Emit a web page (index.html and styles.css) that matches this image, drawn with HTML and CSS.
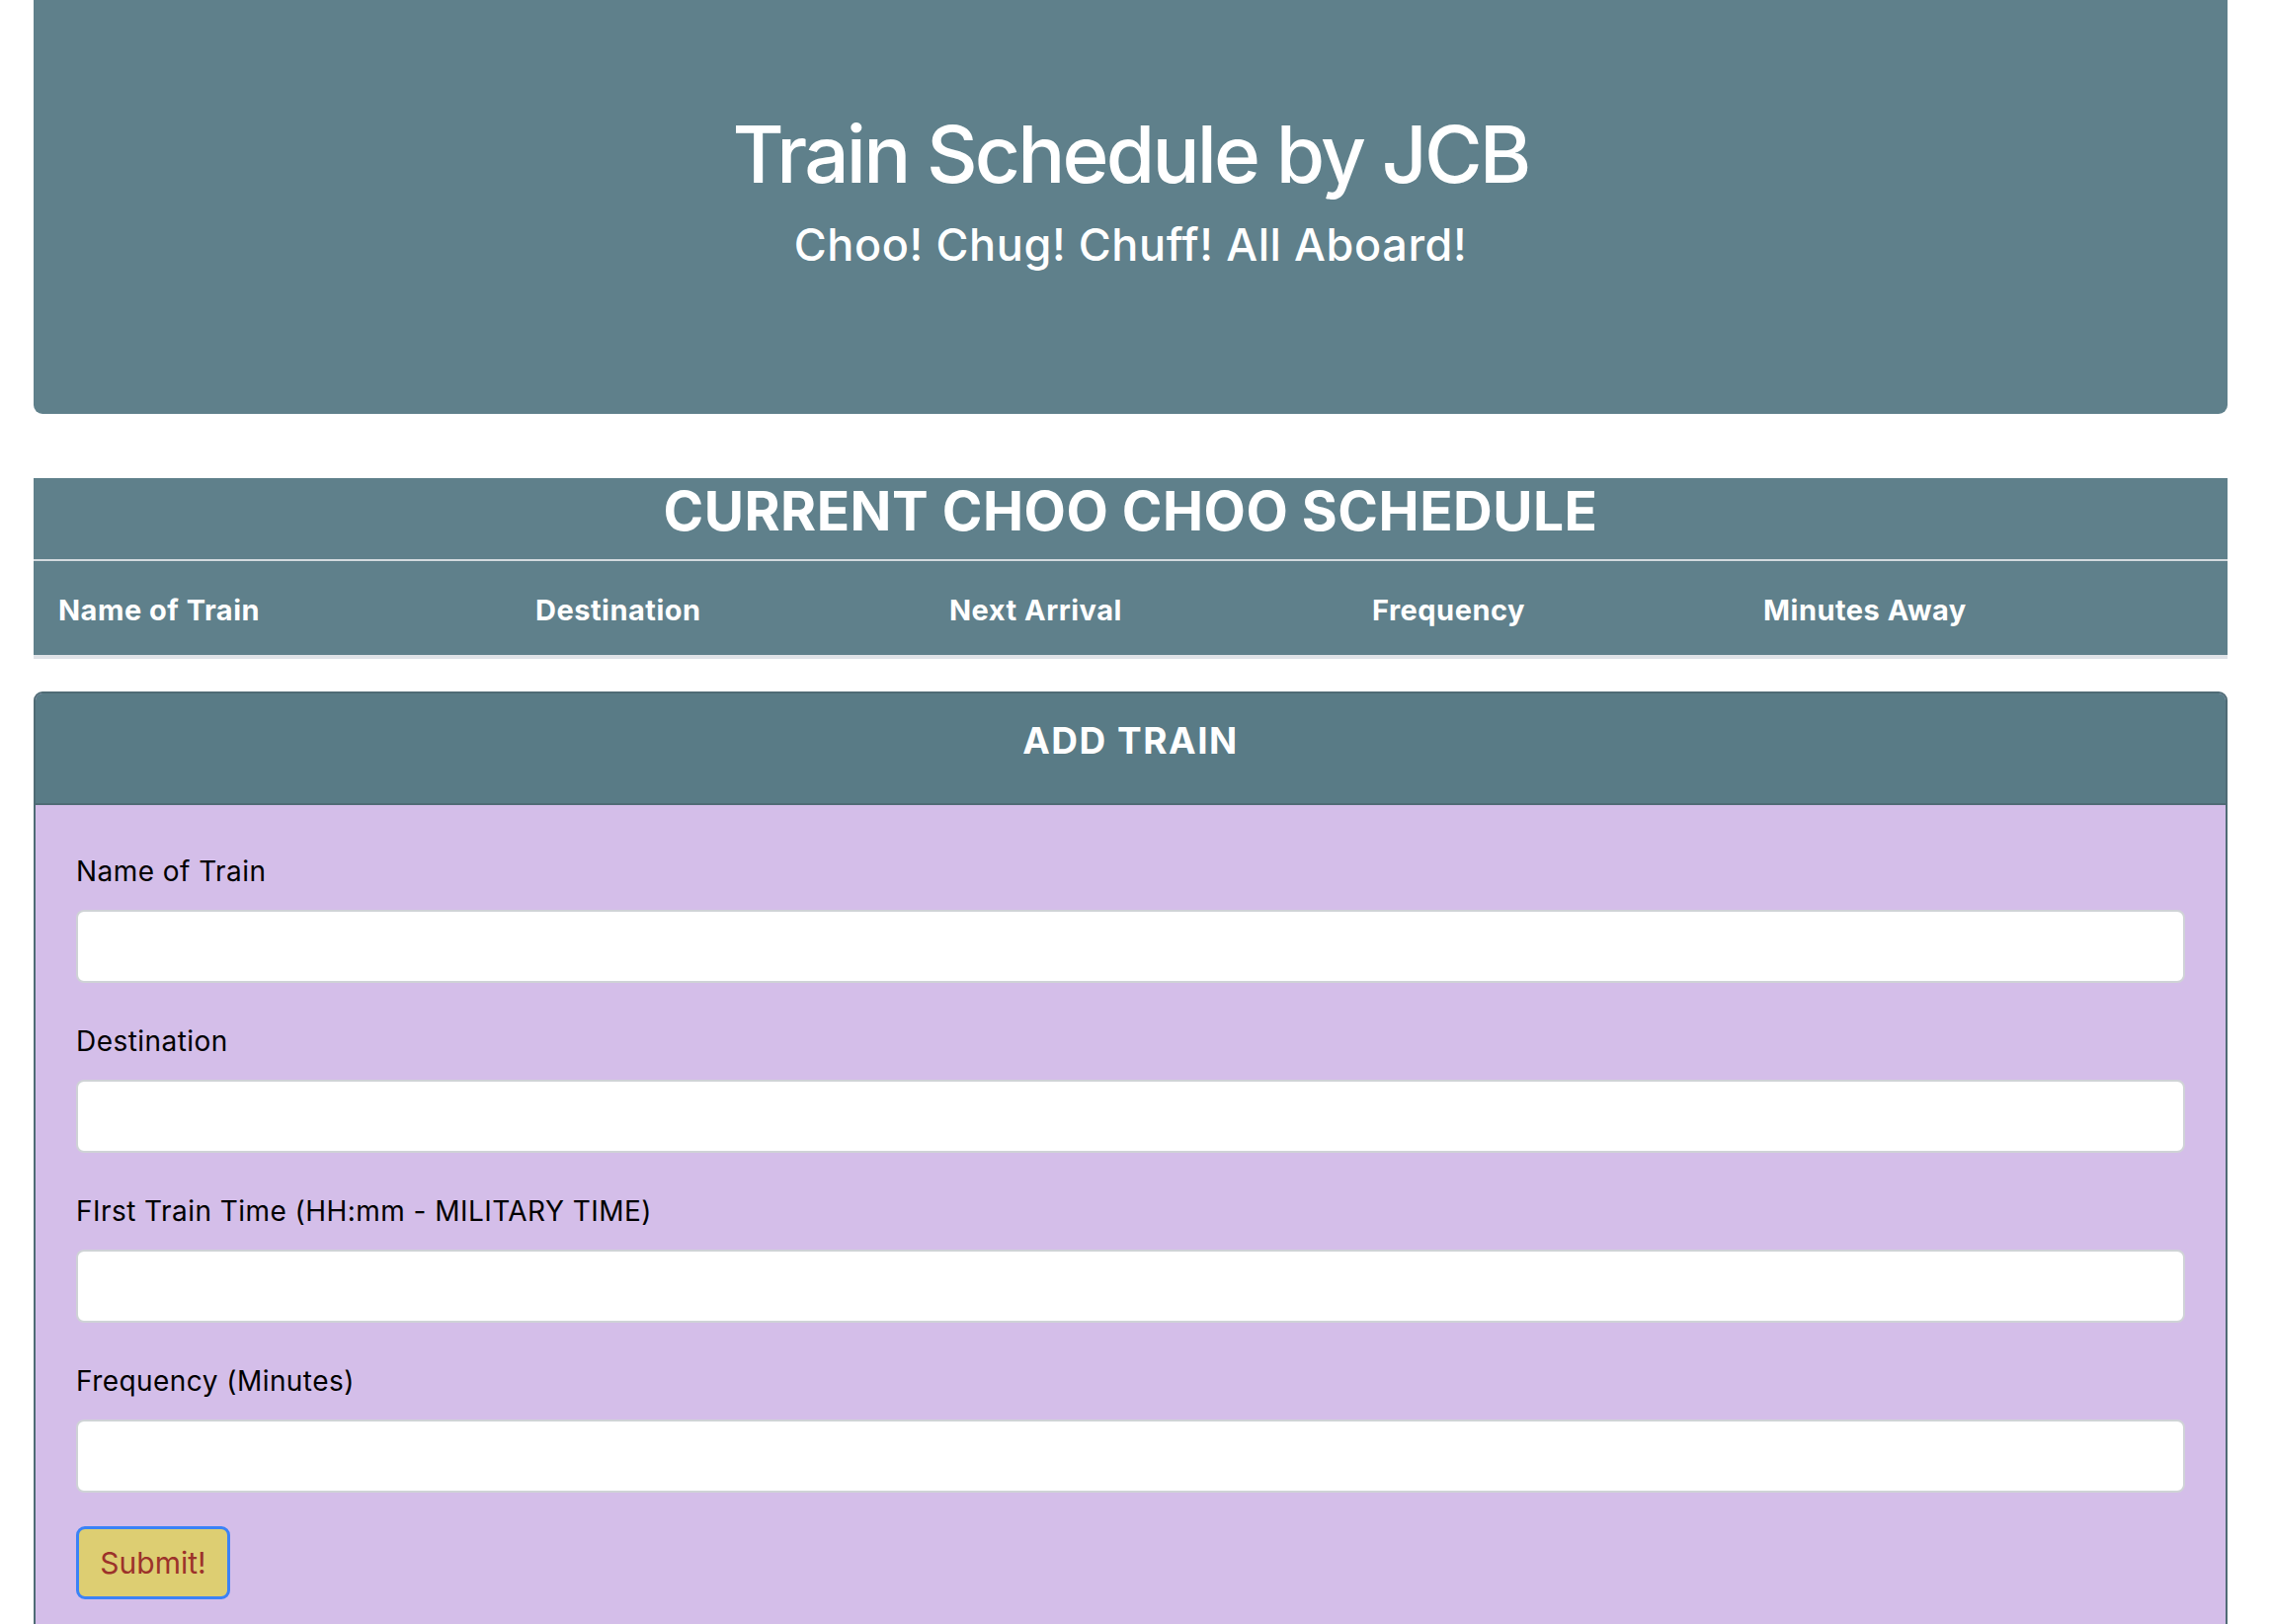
FILE: index.html
```html
<!DOCTYPE html>
<html lang="en">
<head>
<meta charset="utf-8">
<title>Train Schedule by JCB</title>
<link rel="stylesheet" href="styles.css">
</head>
<body>
<div class="page">
  <header class="jumbotron">
    <h1 class="title">Train Schedule by JCB</h1>
    <h2 class="subtitle">Choo! Chug! Chuff! All Aboard!</h2>
  </header>

  <table class="schedule">
    <colgroup>
      <col class="c1"><col class="c2"><col class="c3"><col class="c4"><col class="c5">
    </colgroup>
    <thead>
      <tr><th colspan="5" class="schedule-title">CURRENT CHOO CHOO SCHEDULE</th></tr>
      <tr class="cols">
        <th>Name of Train</th>
        <th>Destination</th>
        <th>Next Arrival</th>
        <th>Frequency</th>
        <th>Minutes Away</th>
      </tr>
    </thead>
    <tbody></tbody>
  </table>

  <section class="card">
    <div class="card-header">ADD TRAIN</div>
    <form class="card-body">
      <div class="form-group">
        <label class="label" for="name">Name of Train</label>
        <input class="input" id="name" type="text">
      </div>
      <div class="form-group">
        <label class="label" for="dest">Destination</label>
        <input class="input" id="dest" type="text">
      </div>
      <div class="form-group">
        <label class="label" for="first">FIrst Train Time (HH:mm - MILITARY TIME)</label>
        <input class="input" id="first" type="text">
      </div>
      <div class="form-group">
        <label class="label" for="freq">Frequency (Minutes)</label>
        <input class="input" id="freq" type="text">
      </div>
      <button class="btn" type="button">Submit!</button>
    </form>
  </section>
</div>
</body>
</html>
```

FILE: styles.css
```css
* { box-sizing: border-box; }

html, body {
  margin: 0;
  padding: 0;
  background: #ffffff;
}

body {
  font-family: Inter, "Noto Sans", "Liberation Sans", sans-serif;
  color: #111111;
}

.page {
  width: 2221px;
  margin-left: 34px;
}

.jumbotron {
  height: 419px;
  background: #5f808b;
  border-radius: 0 0 9px 9px;
  padding-top: 108px;
  text-align: center;
  color: #ffffff;
}

.title {
  margin: 0;
  font-size: 80px;
  line-height: 96px;
  font-weight: 500;
  letter-spacing: -2.8px;
}

.subtitle {
  margin: 17px 0 0;
  font-size: 45px;
  line-height: 54px;
  font-weight: 500;
  letter-spacing: 0.6px;
}

.schedule {
  margin-top: 65px;
  width: 2221px;
  border-collapse: collapse;
  table-layout: fixed;
  background: #5f808b;
  color: #ffffff;
}

.c1 { width: 483px; }
.c2 { width: 419px; }
.c3 { width: 428px; }
.c4 { width: 396px; }
.c5 { width: 495px; }

.schedule-title {
  padding: 0 0 16px;
  font-size: 55px;
  line-height: 66px;
  font-weight: 700;
  text-align: center;
  letter-spacing: 0.5px;
  border-bottom: 2px solid #d3dadf;
}

.cols th {
  padding: 27px 25px 23px;
  font-size: 29px;
  line-height: 45px;
  font-weight: 700;
  text-align: left;
  letter-spacing: 0.5px;
  border-bottom: 4px solid #dfe2e7;
}

.card {
  margin-top: 33px;
  border: 2px solid #4f6b75;
  border-radius: 9px;
  overflow: hidden;
  background: #d4bee9;
}

.card-header {
  background: #597b86;
  color: #ffffff;
  text-align: center;
  font-size: 37px;
  line-height: 45px;
  font-weight: 700;
  letter-spacing: 1.5px;
  padding: 25px 0 41px;
  border-bottom: 2px solid #4f6b75;
}

.card-body {
  display: flex;
  flex-direction: column;
  align-items: flex-start;
  padding: 46px 41px 60px;
}

.form-group {
  width: 100%;
  display: flex;
  flex-direction: column;
}

.form-group + .form-group {
  margin-top: 38px;
}

.label {
  font-size: 28px;
  line-height: 42px;
  font-weight: 400;
  letter-spacing: 0.45px;
  color: #000000;
  margin-bottom: 18px;
}

.input {
  width: 100%;
  height: 74px;
  border: 2px solid #cfd3d6;
  border-radius: 8px;
  background: #ffffff;
  font-family: inherit;
  font-size: 28px;
  padding: 0 18px;
}

.btn {
  margin-top: 34px;
  width: 156px;
  height: 74px;
  background: #ddce72;
  border: 3px solid #3b82f6;
  border-radius: 9px;
  color: #9c322a;
  font-family: inherit;
  font-size: 30px;
  font-weight: 400;
  padding: 0;
}
```
